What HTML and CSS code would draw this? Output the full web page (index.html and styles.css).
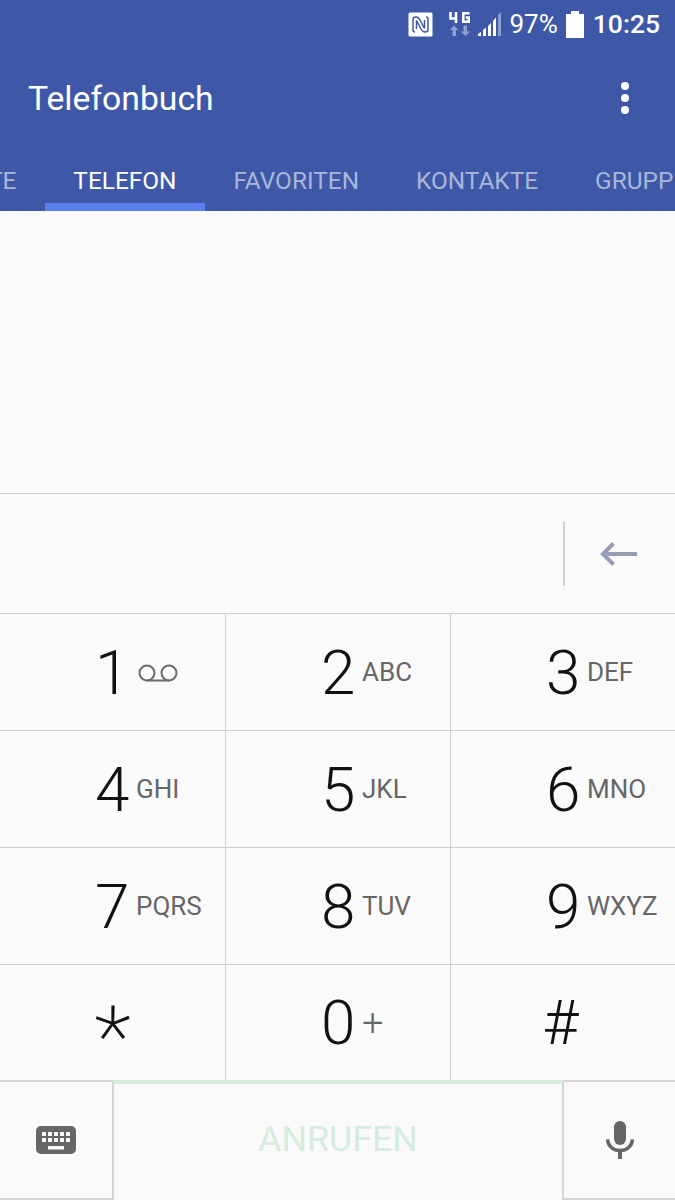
FILE: index.html
```html
<!DOCTYPE html>
<html lang="de">

<head>
    <meta charset="UTF-8">
    <meta name="viewport" content="width=device-width, initial-scale=1.0">
    <title>Telefonbuch</title>
    <link rel="stylesheet" href="styles.css">
</head>

<body>
    <div class="phone">
        <header class="appbar">
            <div class="statusbar">
                <svg class="ico-nfc" width="25" height="25" viewBox="0 0 25 25">
                    <rect x="0.5" y="0.5" width="24" height="24" rx="1.500" fill="#fff"/>
                    <path d="M7 20C5.500 20 5 19.200 5 18V7.500C5 5.800 6 5 8 5c2 0 3 1.200 4 3l4.500 8.500V8" fill="none" stroke="#3e58a7" stroke-width="1.500"/>
                    <path d="M18 5c1.500 0 2 .8 2 2v10.500c0 1.700-1 2.500-3 2.500-2 0-3-1.200-4-3L8.500 8.500V17" fill="none" stroke="#3e58a7" stroke-width="1.500"/>
                </svg>
                <svg class="ico-net" width="21" height="24" viewBox="0 0 21 24">
                    <path d="M1.500 0v6.500H8M7 0v11" fill="none" stroke="#fff" stroke-width="2.600"/>
                    <path d="M20.500 1.300h-6.200v8.400h5.400V5.500h-2.900" fill="none" stroke="#fff" stroke-width="2.600"/>
                    <path d="M5 13.500l4.500 4.500H7v6H3.500v-6H.5zM16.500 24L12 19.500h2.500v-6H18v6h3z" fill="#8f9fcf"/>
                </svg>
                <svg class="ico-signal" width="26" height="26" viewBox="0 0 26 26">
                    <path d="M1 23l3-2v4H1zM6 19l3-2.500V25H6zM11 15l3-3v13h-3zM16 10l3-3.500V25h-3z" fill="#fff"/>
                    <path d="M21 4l3-3v24h-3z" fill="#8f9fcf"/>
                </svg>
                <span class="status-text">97%</span>
                <svg class="ico-batt" width="18" height="27" viewBox="0 0 18 27">
                    <path d="M5 0h8v3h5v24H0V3h5z" fill="#fff"/>
                </svg>
                <span class="status-text status-time">10:25</span>
            </div>

            <div class="toolbar">
                <div class="app-title">Telefonbuch</div>
                <div class="menu-dots">
                    <span></span>
                    <span></span>
                    <span></span>
                </div>
            </div>

            <nav class="tabs">
                <div class="tab">LETZTE</div>
                <div class="tab tab-active">TELEFON</div>
                <div class="tab">FAVORITEN</div>
                <div class="tab">KONTAKTE</div>
                <div class="tab">GRUPPEN</div>
            </nav>
        </header>

        <div class="blank"></div>

        <div class="number-row">
            <div class="number-sep"></div>
            <div class="backspace">
                <svg width="38" height="26" viewBox="0 0 38 26">
                    <path d="M37 13H3M13.500 2.500L3 13l10.500 10.500" fill="none" stroke="#989bb4" stroke-width="4"/>
                </svg>
            </div>
        </div>

        <div class="keypad">
            <div class="key">
                <span class="digit">1</span>
                <svg class="ico-mail" width="40" height="18" viewBox="0 0 40 18">
                    <circle cx="9" cy="9" r="7.500" fill="none" stroke="#6b6b6b" stroke-width="2"/>
                    <circle cx="31" cy="9" r="7.500" fill="none" stroke="#6b6b6b" stroke-width="2"/>
                    <path d="M9 16.500h22" fill="none" stroke="#6b6b6b" stroke-width="2"/>
                </svg>
            </div>
            <div class="key"><span class="digit">2</span><span class="letters">ABC</span></div>
            <div class="key"><span class="digit">3</span><span class="letters">DEF</span></div>
            <div class="key"><span class="digit">4</span><span class="letters">GHI</span></div>
            <div class="key"><span class="digit">5</span><span class="letters">JKL</span></div>
            <div class="key"><span class="digit">6</span><span class="letters">MNO</span></div>
            <div class="key"><span class="digit">7</span><span class="letters">PQRS</span></div>
            <div class="key"><span class="digit">8</span><span class="letters">TUV</span></div>
            <div class="key"><span class="digit">9</span><span class="letters">WXYZ</span></div>
            <div class="key key-center"><span class="star">*</span></div>
            <div class="key"><span class="digit">0</span><span class="letters-plus">+</span></div>
            <div class="key key-center"><span class="hash">#</span></div>
        </div>

        <div class="call-row">
            <div class="call-side">
                <svg width="40" height="28" viewBox="0 0 40 28">
                    <rect width="40" height="28" rx="5" fill="#666"/>
                    <path d="M6 6h4v4H6zM12 6h4v4h-4zM18 6h4v4h-4zM24 6h4v4h-4zM30 6h4v4h-4zM6 12h4v4H6zM12 12h4v4h-4zM18 12h4v4h-4zM24 12h4v4h-4zM30 12h4v4h-4zM12 20h16v3.500H12z" fill="#fafafa"/>
                </svg>
            </div>
            <div class="call-btn">ANRUFEN</div>
            <div class="call-side">
                <svg width="28" height="38" viewBox="0 0 28 38">
                    <rect x="8" y="0" width="12" height="24" rx="6" fill="#666"/>
                    <path d="M1.500 18.500C2 25 7 29.500 14 29.500S26 25 26.500 18.500" fill="none" stroke="#666" stroke-width="3.500"/>
                    <path d="M12 29h4v9h-4z" fill="#666"/>
                </svg>
            </div>
        </div>
    </div>
</body>

</html>
```

FILE: styles.css
```css
* {
    box-sizing: border-box;
}

body {
    margin: 0;
    font-family: Roboto, "Liberation Sans", sans-serif;
    background: #fafafa;
}

.phone {
    width: 675px;
    height: 1200px;
    overflow: hidden;
    display: flex;
    flex-direction: column;
}

.appbar {
    height: 211px;
    background: #3e58a7;
    color: #fff;
    overflow: hidden;
}

.statusbar {
    height: 48px;
    padding-right: 15px;
    display: flex;
    justify-content: flex-end;
    align-items: center;
}

.ico-nfc {
    margin-right: 16px;
}

.ico-net {
    margin-right: 7px;
}

.ico-signal {
    margin-right: 6px;
}

.status-text {
    font-size: 26px;
    line-height: 28px;
}

.ico-batt {
    margin: 0 9px 0 8px;
}

.status-time {
    font-size: 26.500px;
    font-weight: 500;
}

.toolbar {
    height: 100px;
    padding: 0 46px 0 28px;
    display: flex;
    justify-content: space-between;
    align-items: center;
}

.app-title {
    font-size: 33.700px;
}

.menu-dots {
    display: flex;
    flex-direction: column;
    gap: 4px;
}

.menu-dots span {
    width: 8px;
    height: 8px;
    border-radius: 50%;
    background: #fff;
}

.tabs {
    height: 63px;
    margin-left: -97px;
    display: flex;
}

.tab {
    flex-shrink: 0;
    height: 63px;
    padding: 0 28.500px;
    font-size: 24.400px;
    line-height: 65px;
    color: #aab6da;
    white-space: nowrap;
}

.tab-active {
    color: #fff;
    border-bottom: 8px solid #5a80f0;
}

.blank {
    height: 284px;
    border-bottom: 1px solid #cfcfcf;
}

.number-row {
    height: 119px;
    display: flex;
    justify-content: flex-end;
    align-items: center;
}

.number-sep {
    width: 2px;
    height: 64px;
    background: #cfcfcf;
}

.backspace {
    width: 110px;
    padding-left: 35px;
    display: flex;
}

.keypad {
    display: grid;
    grid-template-columns: 226px 225px 224px;
    grid-template-rows: 117px 117px 117px 116px;
}

.key {
    padding-left: 95px;
    border-top: 1px solid #cfcfcf;
    border-right: 1px solid #cfcfcf;
    display: flex;
    align-items: center;
}

.key:nth-child(3n) {
    border-right: 0;
}

.key-center {
    padding-left: 0;
    justify-content: center;
}

.digit {
    width: 41px;
    font-size: 62px;
    font-weight: 300;
    color: #111;
}

.letters {
    font-size: 26px;
    color: #666;
}

.letters-plus {
    font-size: 38px;
    font-weight: 300;
    color: #666;
}

.ico-mail {
    margin-top: 1px;
    margin-left: 2px;
}

.star {
    font-size: 84px;
    line-height: 84px;
    font-weight: 100;
    -webkit-text-stroke: 0.800px #111;
    color: #111;
    transform: translateY(14px);
}

.hash {
    margin-left: -5px;
    font-size: 62px;
    font-weight: 300;
    color: #111;
}

.call-row {
    height: 120px;
    display: grid;
    grid-template-columns: 112px 452px 111px;
}

.call-side {
    border-top: 2px solid #d6d6d6;
    border-bottom: 2px solid #d6d6d6;
    display: flex;
    justify-content: center;
    align-items: center;
}

.call-btn {
    border-left: 2px solid #d6d6d6;
    border-right: 2px solid #d6d6d6;
    border-top: 4px solid #d5ecdf;
    padding-bottom: 6px;
    font-size: 35.800px;
    color: #d5ecdf;
    display: flex;
    justify-content: center;
    align-items: center;
}
```
